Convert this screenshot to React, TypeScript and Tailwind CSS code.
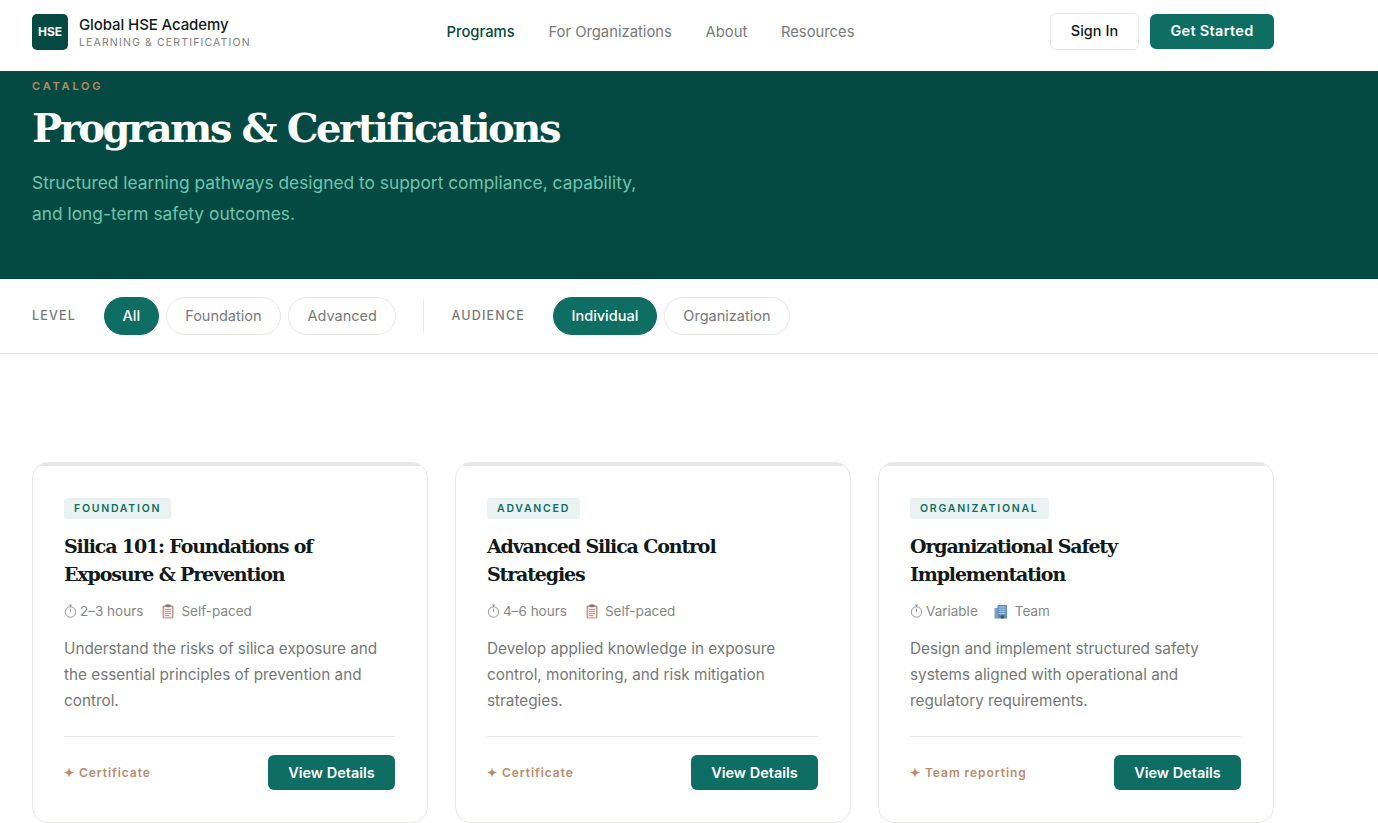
import { Fragment } from "react"

const sans = "font-['Inter','Noto_Sans',sans-serif]"
const slab = "font-['DejaVu_Serif','Liberation_Serif',serif]"

const cards = [
  {
    tag: "FOUNDATION",
    title: ["Silica 101: Foundations of", "Exposure & Prevention"],
    time: "2–3 hours",
    mode: "Self-paced",
    icon: "clipboard",
    desc: ["Understand the risks of silica exposure and", "the essential principles of prevention and", "control."],
    perk: "Certificate",
  },
  {
    tag: "ADVANCED",
    title: ["Advanced Silica Control", "Strategies"],
    time: "4–6 hours",
    mode: "Self-paced",
    icon: "clipboard",
    desc: ["Develop applied knowledge in exposure", "control, monitoring, and risk mitigation", "strategies."],
    perk: "Certificate",
  },
  {
    tag: "ORGANIZATIONAL",
    title: ["Organizational Safety", "Implementation"],
    time: "Variable",
    mode: "Team",
    icon: "building",
    desc: ["Design and implement structured safety", "systems aligned with operational and", "regulatory requirements."],
    perk: "Team reporting",
  },
]

function Stopwatch() {
  return (
    <svg width="13" height="14" viewBox="0 0 13 14" fill="none" stroke="#8a8f8d" strokeWidth="0.9">
      <circle cx="6.5" cy="8" r="5.2" />
      <path d="M4.8 1h3.4M6.5 1v1.8M6.5 4.6v3.6" />
    </svg>
  )
}

function Clipboard() {
  return (
    <svg width="12" height="15" viewBox="0 0 12 15">
      <rect x="0.5" y="1.5" width="11" height="13" rx="1" fill="#c39a86" />
      <rect x="2" y="3" width="8" height="10.4" fill="#f1e6e4" />
      <rect x="3.5" y="0.5" width="5" height="2.5" rx="0.6" fill="#77727c" />
      <path d="M3 5.5h6M3 7.5h6M3 9.5h6M3 11.5h4" stroke="#a598b8" strokeWidth="0.9" />
    </svg>
  )
}

function Building() {
  return (
    <svg width="14" height="15" viewBox="0 0 14 15">
      <rect x="0.5" y="4" width="4" height="10.5" fill="#8b9db2" />
      <rect x="3.5" y="1" width="9.5" height="13.5" fill="#5f8fbd" />
      <path d="M5 3h6.5M5 5.2h6.5M5 7.4h6.5M5 9.6h6.5" stroke="#a9d0ee" strokeWidth="1" />
      <rect x="6.8" y="11.5" width="3" height="3" fill="#4b4f57" />
    </svg>
  )
}

function Pill({ label, on }: { label: string; on?: boolean }) {
  return (
    <button
      className={
        on
          ? "h-[38px] px-[17.5px] rounded-full bg-[#0f6e64] border border-[#0f6e64] text-white text-[14.5px] font-medium"
          : "h-[38px] px-[18.5px] rounded-full bg-white border border-[#e8e8e6] text-[#77797a] text-[14.5px]"
      }
    >
      {label}
    </button>
  )
}

export default function App() {
  return (
    <div className={`${sans} h-[823px] overflow-hidden bg-white text-[#111a18]`}>
      <header className="h-[71px] bg-white flex items-center justify-between pl-8 pr-[104px] pb-[9px]">
        <div className="flex items-center gap-[11px] w-[300px] pt-[2px]">
          <div className="w-9 h-9 rounded-[5px] bg-[#054a42] flex items-center justify-center text-white text-[12px] font-bold">
            HSE
          </div>
          <div className="pt-[2px]">
            <div className="text-[15px] leading-[18px] font-medium tracking-[-0.1px]">Global HSE Academy</div>
            <div className="mt-[1px] text-[10.5px] leading-[16px] tracking-[1.15px] text-[#82817f]">LEARNING &amp; CERTIFICATION</div>
          </div>
        </div>
        <nav className="flex items-center gap-[33.7px] pt-[3px] text-[14.8px] text-[#787a78] -ml-[81px]">
          <span className="text-[#054a42] font-medium">Programs</span>
          <span>For Organizations</span>
          <span>About</span>
          <span>Resources</span>
        </nav>
        <div className="flex items-center gap-[11px]">
          <button className="w-[89px] h-[37px] rounded-[6px] border border-[#e8e8e6] text-[14.5px] font-medium">Sign In</button>
          <button className="w-[124px] h-[35px] rounded-[6px] bg-[#0f6e64] text-white text-[14.5px] tracking-[0.3px] font-semibold">Get Started</button>
        </div>
      </header>

      <section className="h-[208px] bg-[#054a42] pl-8">
        <div className="pt-[7px] text-[11px] leading-[16px] font-semibold tracking-[2.8px] text-[#b98a62]">CATALOG</div>
        <h1 className={`${slab} text-white text-[40px] leading-[56px] font-bold tracking-[-2.45px] mt-[6px]`}>Programs &amp; Certifications</h1>
        <p className="mt-[11px] text-[#6fc4ae] text-[17.35px] leading-[31px]">
          Structured learning pathways designed to support compliance, capability,
          <br />
          and long-term safety outcomes.
        </p>
      </section>

      <section className="h-[75px] border-b border-[#e8e8e6] pl-8 flex items-center">
        <span className="text-[12.5px] font-medium tracking-[1.2px] text-[#77797a] mr-[28px]">LEVEL</span>
        <div className="flex gap-[7px]">
          <Pill label="All" on />
          <Pill label="Foundation" />
          <Pill label="Advanced" />
        </div>
        <div className="w-px h-8 bg-[#e8e8e6] mx-[27px]" />
        <span className="text-[12.5px] font-medium tracking-[1.2px] text-[#77797a] mr-[28px]">AUDIENCE</span>
        <div className="flex gap-[7px]">
          <Pill label="Individual" on />
          <Pill label="Organization" />
        </div>
      </section>

      <main className="w-[1242px] ml-8 mt-[108px] grid grid-cols-3 gap-[27px]">
        {cards.map((c) => (
          <article key={c.tag} className="h-[361px] rounded-[16px] border border-[#e8e8e6] overflow-hidden">
            <div className="h-[3px] bg-[#e5e5e5]" />
            <div className="pl-[31px] pr-8 pt-8">
              <span className="block w-fit h-[21px] px-[10px] rounded-[3px] bg-[#eaf3f1] text-[#0f6e64] text-[10.5px] leading-[21px] font-semibold tracking-[1.75px]">
                {c.tag}
              </span>
              <h3 className={`${slab} mt-[13px] text-[19px] leading-[28px] font-bold tracking-[-1.15px]`}>
                {c.title.map((t) => (
                  <Fragment key={t}>
                    {t}
                    <br />
                  </Fragment>
                ))}
              </h3>
              <div className="mt-[14px] h-[18px] flex items-center text-[13.5px] text-[#858785]">
                <Stopwatch />
                <span className="ml-[3px]">{c.time}</span>
                {c.icon === "clipboard" ? (
                  <span className="ml-[19px]"><Clipboard /></span>
                ) : (
                  <span className="ml-[16px]"><Building /></span>
                )}
                <span className="ml-[7px]">{c.mode}</span>
              </div>
              <p className="mt-[16px] text-[15.3px] leading-[26px] text-[#767876]">
                {c.desc.map((t) => (
                  <Fragment key={t}>
                    {t}
                    <br />
                  </Fragment>
                ))}
              </p>
              <div className="mt-[22px] pt-[18px] border-t border-[#e8e8e6] flex items-center justify-between">
                <span className="text-[12px] font-semibold tracking-[0.95px] text-[#bd8a6c]">✦ {c.perk}</span>
                <button className="w-[127px] h-[35px] rounded-[6px] bg-[#0f6e64] text-white text-[14.5px] font-semibold">View Details</button>
              </div>
            </div>
          </article>
        ))}
      </main>
    </div>
  )
}
